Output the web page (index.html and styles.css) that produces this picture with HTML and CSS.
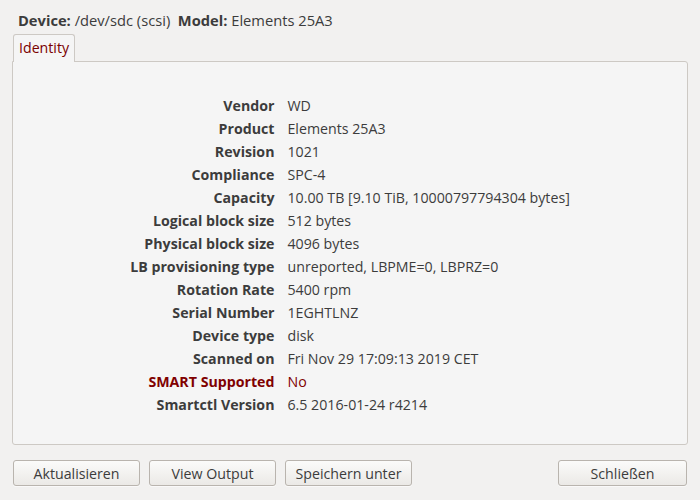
FILE: index.html
```html
<!DOCTYPE html>
<html lang="en">
<head>
    <meta charset="UTF-8">
    <title>Device Information</title>
    <link rel="stylesheet" href="styles.css">
</head>
<body>
    <div class="dialog">
        <div class="device-line">
            <b>Device:</b> /dev/sdc (scsi)&nbsp; <b>Model:</b> Elements 25A3
        </div>

        <div class="tabs">
            <div class="tab active">Identity</div>
        </div>

        <div class="panel">
            <div class="info-grid">
                <div class="label">Vendor</div><div class="value">WD</div>
                <div class="label">Product</div><div class="value">Elements 25A3</div>
                <div class="label">Revision</div><div class="value">1021</div>
                <div class="label">Compliance</div><div class="value">SPC-4</div>
                <div class="label">Capacity</div><div class="value">10.00 TB [9.10 TiB, 10000797794304 bytes]</div>
                <div class="label">Logical block size</div><div class="value">512 bytes</div>
                <div class="label">Physical block size</div><div class="value">4096 bytes</div>
                <div class="label">LB provisioning type</div><div class="value">unreported, LBPME=0, LBPRZ=0</div>
                <div class="label">Rotation Rate</div><div class="value">5400 rpm</div>
                <div class="label">Serial Number</div><div class="value">1EGHTLNZ</div>
                <div class="label">Device type</div><div class="value">disk</div>
                <div class="label">Scanned on</div><div class="value">Fri Nov 29 17:09:13 2019 CET</div>
                <div class="label warn">SMART Supported</div><div class="value warn">No</div>
                <div class="label">Smartctl Version</div><div class="value">6.5 2016-01-24 r4214</div>
            </div>
        </div>

        <div class="buttons">
            <button>Aktualisieren</button>
            <button>View Output</button>
            <button>Speichern unter</button>
            <span class="spacer"></span>
            <button class="close">Schließen</button>
        </div>
    </div>
</body>
</html>
```

FILE: styles.css
```css
body {
    margin: 0;
    background-color: #f2f1f0;
    font-family: "Open Sans", "Noto Sans", sans-serif;
    font-size: 14.2px;
    color: #3c3c3c;
}

.dialog {
    width: 700px;
    height: 500px;
    padding: 10px 12px 0 12px;
    box-sizing: border-box;
    display: flex;
    flex-direction: column;
}

.device-line {
    padding-left: 6px;
    height: 24px;
    line-height: 21px;
    font-size: 14.7px;
}

.tabs {
    display: flex;
    padding-left: 1px;
}

.tab {
    padding: 4px 5px 5px 5px;
    height: 18px;
    line-height: 18px;
    border: 1px solid #cdc9c4;
    border-bottom: none;
    border-radius: 3px 3px 0 0;
    background-color: #f5f5f5;
    margin-bottom: -1px;
    position: relative;
}

.tab.active {
    color: #7a0000;
}

.panel {
    height: 382px;
    border: 1px solid #cdc9c4;
    border-radius: 0 3px 3px 3px;
    background-color: #f5f5f5;
    display: flex;
    align-items: center;
    justify-content: center;
}

.info-grid {
    display: grid;
    grid-template-columns: auto auto;
    column-gap: 13px;
    grid-auto-rows: 23px;
    align-items: center;
    padding-top: 4px;
}

.label {
    font-weight: bold;
    text-align: right;
}

.warn {
    color: #800000;
}

.buttons {
    display: flex;
    gap: 9px;
    margin-top: 15px;
    padding-left: 1px;
}

.spacer {
    flex: 1;
}

button {
    width: 127px;
    height: 26px;
    font-family: inherit;
    font-size: 14.2px;
    color: #3c3c3c;
    border: 1px solid #b9b4ae;
    border-radius: 3px;
    background: linear-gradient(#fbfbfa, #ebe9e6);
    box-shadow: 0 1px 0 rgba(255, 255, 255, 0.6);
}

button.close {
    width: 129px;
    margin-right: 1px;
}
```
